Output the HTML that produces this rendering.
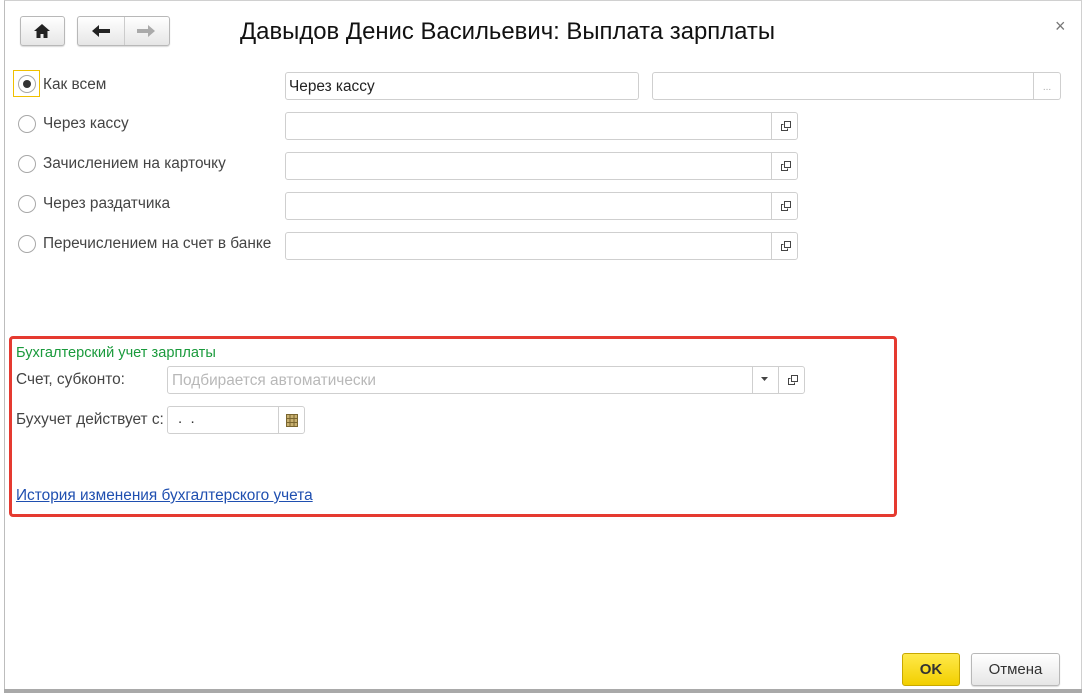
<!DOCTYPE html>
<html><head><meta charset="utf-8"><style>
*{box-sizing:border-box;margin:0;padding:0}
body{width:1088px;height:695px;background:#fff;font-family:"Liberation Sans",Arial,sans-serif;font-size:14px;color:#333;position:relative;overflow:hidden}
.a{position:absolute}
.win{left:4px;top:0;width:1078px;height:690px;border-left:1px solid #bdbdbd;border-top:1px solid #d0d0d0;border-right:1px solid #d0d0d0}
.bottom{left:4px;top:689px;width:1078px;height:4px;background:#a9a9a9}
.btn{border:1px solid #b8b8b8;border-radius:3px;background:linear-gradient(#fff,#e6e6e6);box-shadow:0 1px 1px rgba(0,0,0,.15)}
.inp{border:1px solid #cfcfcf;border-radius:3px;background:#fff;height:28px}
.radio{width:18px;height:18px;border:1px solid #a8a8a8;border-radius:50%;background:#fff}
.lbl{font-size:15.4px;color:#444}
.cp{position:absolute;right:0;top:0;width:26px;height:26px;border-left:1px solid #cfcfcf}
</style></head><body>
<div class="a win"></div>
<div class="a bottom"></div>

<div class="a btn" style="left:20px;top:16px;width:45px;height:30px"></div>
<svg class="a" style="left:33px;top:23px" width="18" height="16" viewBox="0 0 18 16"><path d="M9 1L1 8h2.5v7h4v-4h3v4h4V8H17z" fill="#222"/></svg>
<div class="a btn" style="left:77px;top:16px;width:93px;height:30px"></div>
<div class="a" style="left:124px;top:17px;width:1px;height:28px;background:#ccc"></div>
<svg class="a" style="left:91px;top:23px" width="20" height="16" viewBox="0 0 20 16"><path d="M1 8L8 2v4h11v4H8v4z" fill="#222"/></svg>
<svg class="a" style="left:136px;top:23px" width="20" height="16" viewBox="0 0 20 16"><path d="M19 8L12 2v4H1v4h11v4z" fill="#aaa"/></svg>
<div class="a" style="left:240px;top:18px;font-size:23.9px;color:#111">Давыдов Денис Васильевич: Выплата зарплаты</div>
<div class="a" style="left:1055px;top:16px;font-size:18px;color:#777">×</div>

<div class="a" style="left:13px;top:70px;width:27px;height:27px;border:1px solid #f0c000"></div>
<div class="a radio" style="left:18px;top:75px"></div>
<div class="a" style="left:23px;top:80px;width:8px;height:8px;border-radius:50%;background:#333"></div>
<div class="a lbl" style="left:43px;top:76px">Как всем</div>
<div class="a inp" style="left:285px;top:72px;width:354px"></div>
<div class="a lbl" style="left:289px;top:78px;color:#222">Через кассу</div>
<div class="a inp" style="left:652px;top:72px;width:409px"><div class="cp" style="width:27px;height:26px;color:#aaa;font-size:10px;text-align:center;line-height:30px">...</div></div>

<div class="a radio" style="left:18px;top:115px"></div><div class="a lbl" style="left:43px;top:115px">Через кассу</div>
<div class="a radio" style="left:18px;top:155px"></div><div class="a lbl" style="left:43px;top:155px">Зачислением на карточку</div>
<div class="a radio" style="left:18px;top:195px"></div><div class="a lbl" style="left:43px;top:195px">Через раздатчика</div>
<div class="a radio" style="left:18px;top:235px"></div><div class="a lbl" style="left:43px;top:235px">Перечислением на счет в банке</div>

<div class="a inp" style="left:285px;top:112px;width:513px"><div class="cp"></div></div>
<div class="a inp" style="left:285px;top:152px;width:513px"><div class="cp"></div></div>
<div class="a inp" style="left:285px;top:192px;width:513px"><div class="cp"></div></div>
<div class="a inp" style="left:285px;top:232px;width:513px"><div class="cp"></div></div>
<svg class="a" style="left:780px;top:120px" width="12" height="12"><path d="M4.5 1.5h6v6h-6z M3.5 4.5h-2v6h6v-2" fill="none" stroke="#444"/></svg>
<svg class="a" style="left:780px;top:160px" width="12" height="12"><path d="M4.5 1.5h6v6h-6z M3.5 4.5h-2v6h6v-2" fill="none" stroke="#444"/></svg>
<svg class="a" style="left:780px;top:200px" width="12" height="12"><path d="M4.5 1.5h6v6h-6z M3.5 4.5h-2v6h6v-2" fill="none" stroke="#444"/></svg>
<svg class="a" style="left:780px;top:240px" width="12" height="12"><path d="M4.5 1.5h6v6h-6z M3.5 4.5h-2v6h6v-2" fill="none" stroke="#444"/></svg>

<div class="a" style="left:9px;top:336px;width:888px;height:181px;border:3px solid #e53a30;border-radius:4px"></div>
<div class="a" style="left:16px;top:345px;font-size:14.6px;color:#1a9a3c">Бухгалтерский учет зарплаты</div>
<div class="a lbl" style="left:16px;top:371px">Счет, субконто:</div>
<div class="a inp" style="left:167px;top:366px;width:638px"><div class="cp" style="right:26px"></div><div class="cp"></div></div>
<div class="a" style="left:172px;top:372px;font-size:15.4px;color:#b8b8b8">Подбирается автоматически</div>
<svg class="a" style="left:761px;top:377px" width="8" height="5"><path d="M0 0h7L3.5 4z" fill="#444"/></svg>
<svg class="a" style="left:787px;top:374px" width="12" height="12"><path d="M4.5 1.5h6v6h-6z M3.5 4.5h-2v6h6v-2" fill="none" stroke="#444"/></svg>
<div class="a lbl" style="left:16px;top:411px">Бухучет действует с:</div>
<div class="a inp" style="left:167px;top:406px;width:138px"><div class="cp"></div></div>
<div class="a" style="left:178px;top:410px;font-size:15px">.&nbsp;&nbsp;.</div>
<svg class="a" style="left:286px;top:414px" width="12" height="13"><rect x="0.5" y="0.5" width="11" height="12" fill="#c8b070" stroke="#7a6630"/><path d="M0 4.5h12M0 8.5h12M4 0v13M8 0v13" stroke="#7a6630"/></svg>
<div class="a" style="left:16px;top:487px;font-size:15.4px;color:#1f4fb0;text-decoration:underline">История изменения бухгалтерского учета</div>

<div class="a" style="left:902px;top:653px;width:58px;height:33px;border:1px solid #c8a800;border-radius:3px;background:linear-gradient(#ffe94a,#f2cf00);font-weight:bold;font-size:15px;text-align:center;line-height:31px;color:#333">OK</div>
<div class="a btn" style="left:971px;top:653px;width:89px;height:33px;font-size:15px;text-align:center;line-height:31px;color:#333">Отмена</div>
</body></html>
